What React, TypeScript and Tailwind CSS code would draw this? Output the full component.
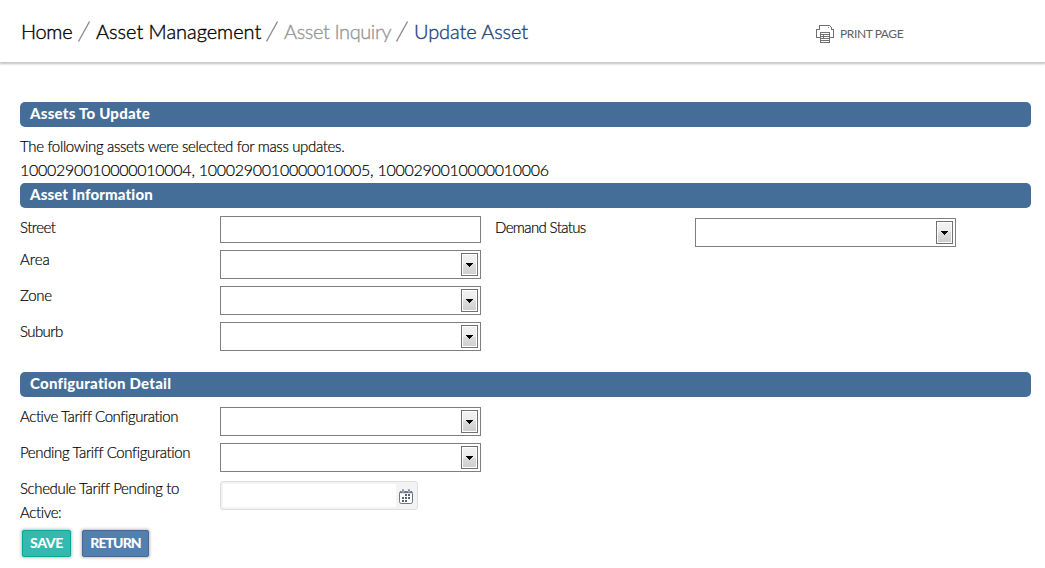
import React from "react";

function Slash() {
  return (
    <svg width="12" height="22" viewBox="0 0 12 22" className="mt-[2px] block shrink-0" aria-hidden="true">
      <path d="M0.5 20.5L11.5 0.5" stroke="#8c8c8c" strokeWidth="1.3" fill="none" />
    </svg>
  );
}

function PrinterIcon() {
  return (
    <svg width="18" height="18" viewBox="0 0 18 18" fill="none" stroke="#707070" shapeRendering="crispEdges" aria-hidden="true">
      <path d="M3.5 4V.5h10L15.5 2.5V4.5h2v8h-4M4 12.5H.5v-8h3" />
      <path d="M4.5 7.5h9v10h-9zM4 9.5h10M4 11.5h10M4 13.5h10M4 15.5h10M7.5 9v5" />
      <path d="M12 2.5h1" />
    </svg>
  );
}

function CalendarIcon() {
  return (
    <svg width="14" height="15" viewBox="0 0 14 15" aria-hidden="true">
      <rect x=".5" y="2.5" width="13" height="12" rx="1.8" fill="#fff" stroke="#6b7482" />
      <path d="M1 2h12v2.2H1z" fill="#6b7482" />
      <path d="M3 0h2v3H3zM9 0h2v3H9z" fill="#6b7482" stroke="#f3f3f3" strokeWidth=".5" />
      <path
        d="M6 5h2v2H6zM9 5h2v2H9zM3 8h2v2H3zM6 8h2v2H6zM9 8h2v2H9zM3 11h2v2H3zM6 11h2v2H6z"
        fill="#596373"
        shapeRendering="crispEdges"
      />
    </svg>
  );
}

function SectionBar({ title, spacing }: { title: string; spacing: string }) {
  return (
    <h2 className="h-[25px] rounded-[5px] bg-[#446e97] pl-[10px] text-[15px] leading-[23px] font-black text-white">
      <span className={spacing}>{title}</span>
    </h2>
  );
}

function SelectBox() {
  return (
    <div role="combobox" className="mt-[2px] flex h-[29px] w-[261px] items-center justify-end border border-[#7f7f7f] bg-white pr-[2px]">
      <div className="flex h-[23px] w-[17px] items-center justify-center border border-[#707070] bg-white p-px">
        <div className="flex h-full w-full items-center justify-center bg-[linear-gradient(#f2f2f2_0%,#ebebeb_50%,#dddddd_50%,#cfcfcf_100%)]">
          <svg width="7" height="4" viewBox="0 0 7 4" shapeRendering="crispEdges" className="mt-px">
            <path d="M0 0h7v1H6v1H5v1H4v1H3V3H2V2H1V1H0z" fill="#000" />
          </svg>
        </div>
      </div>
    </div>
  );
}

function Label({ children, className }: { children: React.ReactNode; className: string }) {
  return (
    <div className="-mt-px w-[200px] shrink-0">
      <span className={className}>{children}</span>
    </div>
  );
}

export default function App() {
  return (
    <div className="h-[568px] w-full overflow-hidden bg-white font-['Lato',sans-serif] text-[15px] leading-[24px] font-light text-black">
      <header className="flex h-[63px] items-center border-b border-[#cbcbcb] pl-[21px] shadow-[0_1px_2px_rgba(0,0,0,0.25)]">
        <nav className="flex w-[795px] items-center text-[20px] leading-[24px] whitespace-nowrap [-webkit-text-stroke:0.35px]">
          <div className="w-[57px] tracking-[-0.3px] text-black">Home</div>
          <Slash />
          <div className="ml-[6px] w-[170px] tracking-[-0.03px] text-black">Asset Management</div>
          <Slash />
          <div className="ml-[6px] w-[112px] tracking-[-0.4px] text-[#969696]">Asset Inquiry</div>
          <Slash />
          <div className="ml-[6px] tracking-[-0.1px] text-[#1b4479]">Update Asset</div>
        </nav>
        <button className="mt-[6px] flex items-center gap-[6px] text-[12px] leading-[18px] font-normal text-[#606060]">
          <PrinterIcon />
          <span className="tracking-[-0.4px] whitespace-nowrap">PRINT PAGE</span>
        </button>
      </header>

      <main className="pt-[39px] pr-[14px] pl-[20px]">
        <SectionBar title="Assets To Update" spacing="tracking-[0.25px]" />
        <section className="h-[56px] pt-[7px] whitespace-nowrap [-webkit-text-stroke:0.2px]">
          <p className="tracking-[-0.33px]">The following assets were selected for mass updates.</p>
          <p className="text-[16px] leading-[24px] tracking-[-0.26px]">1000290010000010004, 1000290010000010005, 1000290010000010006</p>
        </section>

        <SectionBar title="Asset Information" spacing="tracking-[0.15px]" />
        <section className="flex h-[164px] pt-[8px] [-webkit-text-stroke:0.2px]">
          <div className="w-[475px]">
            <div className="flex h-[32px]">
              <Label className="tracking-[-0.5px]">Street</Label>
              <input aria-label="Street" className="h-[27px] w-[261px] border border-[#7f7f7f] bg-white px-1 outline-none" />
            </div>
            <div className="flex h-[36px]">
              <Label className="tracking-[0px]">Area</Label>
              <SelectBox />
            </div>
            <div className="flex h-[36px]">
              <Label className="tracking-[-0.3px]">Zone</Label>
              <SelectBox />
            </div>
            <div className="flex h-[36px]">
              <Label className="tracking-[-0.6px]">Suburb</Label>
              <SelectBox />
            </div>
          </div>
          <div className="flex">
            <Label className="tracking-[-0.63px]">Demand Status</Label>
            <SelectBox />
          </div>
        </section>

        <SectionBar title="Configuration Detail" spacing="tracking-[0.25px]" />
        <section className="pt-[8px] [-webkit-text-stroke:0.2px]">
          <div className="flex h-[36px]">
            <Label className="tracking-[-0.41px]">Active Tariff Configuration</Label>
            <SelectBox />
          </div>
          <div className="flex h-[36px]">
            <Label className="tracking-[-0.37px]">Pending Tariff Configuration</Label>
            <SelectBox />
          </div>
          <div className="flex h-[53px]">
            <Label className="tracking-[-0.37px]">
              Schedule Tariff Pending to
              <br />
              Active:
            </Label>
            <div className="mt-[4px] flex h-[29px] w-[198px] items-center rounded-[3px] border border-[#dedede] bg-[#f3f3f3] pl-[2px]">
              <input aria-label="Schedule date" className="h-[23px] w-[173px] bg-white px-1 outline-none" />
              <button aria-label="Pick a date" className="mt-px ml-[3px]">
                <CalendarIcon />
              </button>
            </div>
          </div>
        </section>
        <div className="flex gap-[11px] pl-[2px] text-[14px] leading-[23px] font-black text-white">
          <button className="h-[27px] w-[49px] rounded-[2px] border border-[#00a99d] bg-[#35b9af] pb-[2px] shadow-[0_0_3px_1px_rgba(0,0,0,0.25)]">
            <span className="tracking-[-0.4px]">SAVE</span>
          </button>
          <button className="h-[27px] w-[67px] rounded-[2px] border border-[#416b96] bg-[#527fb0] pb-[2px] shadow-[0_0_3px_1px_rgba(0,0,0,0.25)]">
            <span className="tracking-[-0.9px]">RETURN</span>
          </button>
        </div>
      </main>
    </div>
  );
}
